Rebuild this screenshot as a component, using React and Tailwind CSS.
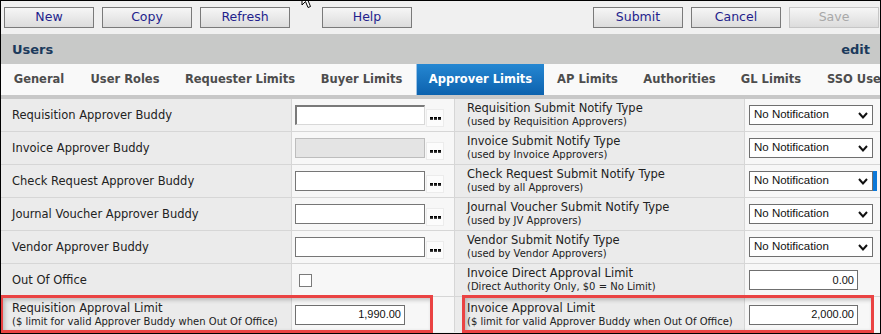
import React from "react";

const V = { fontFamily: '"DejaVu Sans", Verdana, sans-serif' };
const A = { fontFamily: '"Liberation Sans", Arial, sans-serif' };

function Btn({ children, disabled }) {
  return (
    <div
      className={`w-[90px] h-[21px] flex items-center justify-center border bg-linear-to-b from-[#f6f6f6] to-[#dcdcdc] text-[12.5px] ${
        disabled ? "border-[#c6c6c6] text-[#a8a8a8]" : "border-[#7a7a7a] text-[#231e8c]"
      }`}
    >
      {children}
    </div>
  );
}

function Ellipsis() {
  return (
    <div className="mt-[5px] ml-[1px] w-[18px] h-[18px] bg-[#fcfcfc] border border-[#ececec] flex items-center justify-center gap-[1px] pt-[1px]">
      <span className="w-[3px] h-[3px] bg-linear-to-b from-[#000] to-[#555]" />
      <span className="w-[3px] h-[3px] bg-linear-to-b from-[#000] to-[#555]" />
      <span className="w-[3px] h-[3px] bg-linear-to-b from-[#000] to-[#555]" />
    </div>
  );
}

function TextInput({ kind }) {
  if (kind === "inset")
    return (
      <div className="w-[130px] h-[20px] bg-white border border-t-2 border-l-2 border-t-[#7a7a7a] border-l-[#7a7a7a] border-r-[#d8d8d8] border-b-[#d8d8d8]" />
    );
  if (kind === "disabled")
    return <div className="w-[130px] h-[20px] bg-[#e4e4e4] border border-[#bdbdbd]" />;
  return <div className="w-[130px] h-[20px] bg-white border border-[#767676]" />;
}

function Select({ focus }) {
  return (
    <div className="flex items-center">
      <div
        className="w-[124px] h-[20px] bg-white border border-[#6f6f6f] flex items-center justify-between pl-[4px] pr-[4px] text-[11.5px] text-[#111]"
        style={A}
      >
        <span>No Notification</span>
        <svg width="10" height="7" viewBox="0 0 10 7">
          <polyline points="1,1 5,5.5 9,1" fill="none" stroke="#111" strokeWidth="2" />
        </svg>
      </div>
      {focus && <div className="w-[4px] h-[20px] bg-[#0b78d8]" />}
    </div>
  );
}

function NumInput({ value, w }) {
  return (
    <div
      className={`${w} h-[20px] bg-white border border-[#6f6f6f] flex items-center justify-end pr-[3px] text-[11px] text-[#111]`}
      style={A}
    >
      {value}
    </div>
  );
}

function Label({ main, sub }) {
  return (
    <div className="flex flex-col justify-center text-[#222]" style={V}>
      <div className="text-[11.5px] leading-[13px]">{main}</div>
      {sub && <div className="text-[10px] leading-[13px]">{sub}</div>}
    </div>
  );
}

const rows = [
  {
    l: { main: "Requisition Approver Buddy" },
    lc: <><TextInput kind="inset" /><Ellipsis /></>,
    r: { main: "Requisition Submit Notify Type", sub: "(used by Requisition Approvers)" },
    rc: <Select />,
  },
  {
    l: { main: "Invoice Approver Buddy" },
    lc: <><TextInput kind="disabled" /><Ellipsis /></>,
    r: { main: "Invoice Submit Notify Type", sub: "(used by Invoice Approvers)" },
    rc: <Select />,
  },
  {
    l: { main: "Check Request Approver Buddy" },
    lc: <><TextInput /><Ellipsis /></>,
    r: { main: "Check Request Submit Notify Type", sub: "(used by all Approvers)" },
    rc: <Select focus />,
  },
  {
    l: { main: "Journal Voucher Approver Buddy" },
    lc: <><TextInput /><Ellipsis /></>,
    r: { main: "Journal Voucher Submit Notify Type", sub: "(used by JV Approvers)" },
    rc: <Select />,
  },
  {
    l: { main: "Vendor Approver Buddy" },
    lc: <><TextInput /><Ellipsis /></>,
    r: { main: "Vendor Submit Notify Type", sub: "(used by Vendor Approvers)" },
    rc: <Select />,
  },
  {
    l: { main: "Out Of Office" },
    lc: <div className="ml-[4px] w-[13px] h-[13px] bg-white border border-[#7a7a7a]" />,
    r: { main: "Invoice Direct Approval Limit", sub: "(Direct Authority Only, $0 = No Limit)" },
    rc: <NumInput value="0.00" w="w-[109px]" />,
  },
  {
    l: { main: "Requisition Approval Limit", sub: "($ limit for valid Approver Buddy when Out Of Office)" },
    lc: <NumInput value="1,990.00" w="w-[110px]" />,
    r: { main: "Invoice Approval Limit", sub: "($ limit for valid Approver Buddy when Out Of Office)" },
    rc: <NumInput value="2,000.00" w="w-[109px]" />,
    last: true,
  },
];

const tabs = [
  ["General", "w-[76px]"],
  ["User Roles", "w-[96px]"],
  ["Requester Limits", "w-[134px]"],
  ["Buyer Limits", "w-[109px]"],
  ["Approver Limits", "w-[128px]", true],
  ["AP Limits", "w-[87px]"],
  ["Authorities", "w-[97px]"],
  ["GL Limits", "w-[86px]"],
];

export default function App() {
  return (
    <div className="relative w-[881px] h-[334px] border border-black bg-[#f0f0f0] overflow-hidden" style={V}>
      {/* toolbar */}
      <div className="h-[33px] flex items-center pl-[3px] pr-[1px]">
        <div className="flex gap-[8px]">
          <Btn>New</Btn>
          <Btn>Copy</Btn>
          <Btn>Refresh</Btn>
        </div>
        <div className="ml-[32px]">
          <Btn>Help</Btn>
        </div>
        <div className="ml-auto flex gap-[8px]">
          <Btn>Submit</Btn>
          <Btn>Cancel</Btn>
          <Btn disabled>Save</Btn>
        </div>
      </div>

      {/* header */}
      <div className="h-[30px] bg-[#c8c9c8] flex items-center justify-between pl-[11px] pr-[10px] pt-[1px] text-[13px] font-bold text-[#1b3a5c]">
        <span>Users</span>
        <span>edit</span>
      </div>

      {/* tabs */}
      <div className="h-[31px] bg-[#f9f9f9] flex text-[11.5px] font-bold text-[#4d4d4d] whitespace-nowrap">
        {tabs.map(([t, w, active]) => (
          <div
            key={t}
            className={`${w} shrink-0 flex items-center justify-center ${
              active ? "bg-linear-to-b from-[#2587d2] to-[#0c62ae] text-white border-l border-[#9cc3e6]" : ""
            }`}
          >
            {t}
          </div>
        ))}
        <div className="flex-1 flex items-center pl-[13px] overflow-hidden">SSO Users</div>
      </div>
      <div className="h-[4px] bg-[#c8c8c8]" />

      {/* rows */}
      {rows.map((r, i) => (
        <div
          key={i}
          className={`grid grid-cols-[291px_163px_290px_135px] ${r.last ? "h-[35px]" : "h-[33px] border-b border-[#d6d6d6]"}`}
        >
          <div className="bg-[#ebebeb] border-r border-[#d6d6d6] pl-[11px] flex items-center">
            <Label {...r.l} />
          </div>
          <div className="bg-[#f7f7f7] border-r border-[#d6d6d6] pl-[3px] flex items-center">{r.lc}</div>
          <div className="bg-[#ebebeb] border-r border-[#d6d6d6] pl-[12px] flex items-center">
            <Label {...r.r} />
          </div>
          <div className="bg-[#f7f7f7] pl-[4px] flex items-center">{r.rc}</div>
        </div>
      ))}

      {/* annotation highlight boxes */}
      <div className="absolute left-[-1px] top-[294px] w-[433px] h-[38px] border-[3px] border-[#ea4343] shadow-[inset_2px_2px_4px_rgba(0,0,0,0.22)]" />
      <div className="absolute left-[461px] top-[294px] w-[412px] h-[38px] border-[3px] border-[#ea4343] shadow-[inset_2px_2px_4px_rgba(0,0,0,0.22)]" />

      {/* mouse cursor */}
      <svg className="absolute left-[300px] top-[-12px]" width="14" height="21" viewBox="0 0 14 21">
        <path d="M1,1 L1,16 L4.5,12.5 L7,18.5 L9.5,17.5 L7,11.5 L12,11.5 Z" fill="#fff" stroke="#000" strokeWidth="1" />
      </svg>
    </div>
  );
}
